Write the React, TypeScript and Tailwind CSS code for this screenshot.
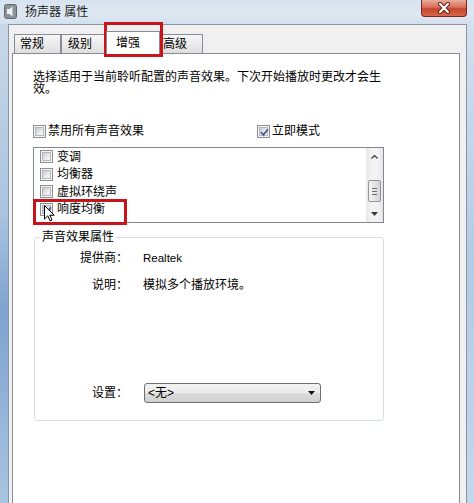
import React from 'react';

const Check = ({ checked = false }: { checked?: boolean }) => (
  <span className="relative flex h-[13px] w-[13px] shrink-0 items-center justify-center border border-[#8e8f8f] bg-[#f4f4f4]">
    <span className="h-[9px] w-[9px] border border-[#b4b8bd] bg-[linear-gradient(135deg,#c6c9ce,#e9ebee_60%,#fbfbfb)]" />
    {checked && (
      <svg className="absolute left-[1px] top-[1px]" width="11" height="11" viewBox="0 0 11 11">
        <path d="M2 5.2 L4.4 7.8 L9 2.2" fill="none" stroke="#4a5a94" strokeWidth="1.8" />
      </svg>
    )}
  </span>
);

const tabs = [
  { label: '常规', cls: 'w-[47px] pl-[5px]' },
  { label: '级别', cls: 'w-[45px] pl-[6px]' },
  { label: '增强', cls: 'w-[54px] pl-[9px]', active: true },
  { label: '高级', cls: 'w-[43px] pl-[2px]' },
];

const effects = [
  { label: '变调' },
  { label: '均衡器' },
  { label: '虚拟环绕声' },
  { label: '响度均衡', checked: true },
];

export default function App() {
  return (
    <div className="relative flex h-[503px] w-[474px] flex-col overflow-hidden bg-[#bcd2ea] font-['Liberation_Sans','Noto_Sans_CJK_SC',sans-serif] text-[12px] text-black">
      {/* title bar */}
      <div className="flex h-[24px] shrink-0 items-start bg-[linear-gradient(180deg,#d6e3f0,#dfe8f2_60%,#d2e0ee)]">
        <svg className="ml-[4px] mt-[4px]" width="13" height="15" viewBox="0 0 13 15">
          <rect x="0.5" y="0.5" width="12" height="14" rx="2" fill="#8a939c" stroke="#5e666e" />
          <path d="M3 5 H5.5 L8.5 2.5 V12.5 L5.5 10 H3 Z" fill="#f2f2f2" />
        </svg>
        <span className="ml-[8px] mt-[5px] leading-[14px] text-[#1c1c1c]">扬声器 属性</span>
        <div className="ml-auto mr-[7px] flex h-[17px] w-[46px] items-center justify-center rounded-b-[4px] border border-t-0 border-[#7a2a1d] bg-[linear-gradient(180deg,#e9ab9c,#d8705b_45%,#c7452e_55%,#d9684a)]">
          <svg width="14" height="12" viewBox="0 0 14 12">
            <path d="M3 2 L11 10 M11 2 L3 10" stroke="#5a1e14" strokeWidth="4" strokeLinecap="round" />
            <path d="M3 2 L11 10 M11 2 L3 10" stroke="#ffffff" strokeWidth="2.2" strokeLinecap="round" />
          </svg>
        </div>
      </div>

      <div className="flex min-h-0 flex-1">
        <div className="w-[8px] shrink-0 bg-[linear-gradient(180deg,#c9d8e8,#a9c3df_40%,#7ea3cf_60%,#a9c4e1)]" />
        {/* client area */}
        <div className="min-w-0 flex-1 overflow-hidden border-x border-t border-[#8795a6] bg-[#f0f0f0] pl-[3px] pr-[6px]">
          <div className="flex h-[28px] items-end pl-[2px]">
            {tabs.map((t) =>
              t.active ? (
                <div
                  key={t.label}
                  className={`relative z-10 -mb-px h-[23px] border border-b-0 border-[#898c95] bg-white pt-[4px] leading-[14px] ${t.cls}`}
                >
                  {t.label}
                </div>
              ) : (
                <div
                  key={t.label}
                  className={`h-[19px] border border-b-0 border-[#898c95] bg-[linear-gradient(180deg,#f6f6f6,#ebebeb_50%,#dedede)] pt-[2px] leading-[14px] ${t.cls}`}
                >
                  {t.label}
                </div>
              )
            )}
          </div>

          {/* tab panel */}
          <div className="flex h-[470px] flex-col border border-[#898c95] bg-white">
            <p className="ml-[20px] mt-[17px] w-[350px] leading-[12px]">
              选择适用于当前聆听配置的声音效果。下次开始播放时更改才会生效。
            </p>

            <div className="ml-[20px] mt-[29px] flex h-[14px] items-center leading-[14px]">
              <label className="flex w-[224px] items-center gap-[2px]">
                <Check />
                <span>禁用所有声音效果</span>
              </label>
              <label className="flex items-center gap-[2px]">
                <Check checked />
                <span>立即模式</span>
              </label>
            </div>

            {/* effects list */}
            <div className="ml-[20px] mt-[9px] flex h-[76px] w-[351px] border border-[#828790] bg-white">
              <div className="flex-1">
                {effects.map((e) => (
                  <div key={e.label} className="flex h-[17.5px] items-center gap-[4px] pl-[6px] leading-[14px]">
                    <Check checked={e.checked} />
                    <span>{e.label}</span>
                  </div>
                ))}
              </div>
              <div className="flex w-[17px] flex-col bg-[linear-gradient(90deg,#e6e6e6,#f3f3f3_30%,#f3f3f3_70%,#e6e6e6)]">
                <div className="flex h-[17px] items-center justify-center">
                  <svg width="7" height="4" viewBox="0 0 7 4">
                    <path d="M0.5 3.5 L3.5 0.5 L6.5 3.5" fill="none" stroke="#3b3b3b" strokeWidth="1.2" />
                  </svg>
                </div>
                <div className="flex-1 px-[2px] pt-[15px]">
                  <div className="flex h-[22px] flex-col items-center justify-center gap-[2px] rounded-[2px] border border-[#959595] bg-[linear-gradient(90deg,#f4f4f4,#e4e4e4_50%,#d4d4d4)]">
                    <span className="h-px w-[5px] bg-[#6b6b6b]" />
                    <span className="h-px w-[5px] bg-[#6b6b6b]" />
                    <span className="h-px w-[5px] bg-[#6b6b6b]" />
                  </div>
                </div>
                <div className="flex h-[17px] items-center justify-center">
                  <svg width="7" height="4" viewBox="0 0 7 4">
                    <path d="M0 0 H7 L3.5 4 Z" fill="#3b3b3b" />
                  </svg>
                </div>
              </div>
            </div>

            {/* properties group */}
            <fieldset className="ml-[21px] mt-[8px] w-[350px] rounded-[3px] border border-[#d5dfe5] pb-[17px]">
              <legend className="ml-[5px] px-[2px] leading-[12px]">声音效果属性</legend>
              <div className="mt-[8px] flex h-[14px] items-center leading-[14px]">
                <span className="w-[93px] text-right">提供商：</span>
                <span className="ml-[15px] text-[11.5px]">Realtek</span>
              </div>
              <div className="mt-[13px] flex h-[14px] items-center leading-[14px]">
                <span className="w-[93px] text-right">说明：</span>
                <span className="ml-[15px]">模拟多个播放环境。</span>
              </div>
              <div className="mt-[91px] flex h-[20px] items-center">
                <span className="w-[93px] text-right leading-[14px]">设置：</span>
                <div className="ml-[16px] flex h-[20px] w-[177px] items-center rounded-[3px] border border-[#707070] bg-[linear-gradient(180deg,#f2f2f2,#ebebeb_50%,#dddddd_51%,#cfcfcf)] pl-[3px] pr-[5px] leading-[14px]">
                  <span>&lt;无&gt;</span>
                  <svg className="ml-auto" width="7" height="4" viewBox="0 0 7 4">
                    <path d="M0 0 H7 L3.5 4 Z" fill="#111111" />
                  </svg>
                </div>
              </div>
            </fieldset>
          </div>
        </div>
        <div className="w-[7px] shrink-0 bg-[linear-gradient(180deg,#d3e0ee,#b3cbe4_50%,#c4d7ec)]" />
      </div>

      {/* annotation boxes */}
      <div className="pointer-events-none absolute left-[104px] top-[22px] h-[35px] w-[59px] border-[3px] border-[#c8151c]" />
      <div className="pointer-events-none absolute left-[33px] top-[199px] h-[26px] w-[94px] border-[3px] border-[#c8151c]" />

      {/* mouse pointer */}
      <svg className="pointer-events-none absolute left-[44px] top-[205px]" width="11" height="17" viewBox="0 0 11 17">
        <path d="M0.5 0.5 V14 L3.8 10.8 L6 15.8 L8 15 L5.8 10.2 L10.2 10.2 Z" fill="#ffffff" stroke="#000000" strokeWidth="1" strokeLinejoin="round" />
      </svg>
    </div>
  );
}
